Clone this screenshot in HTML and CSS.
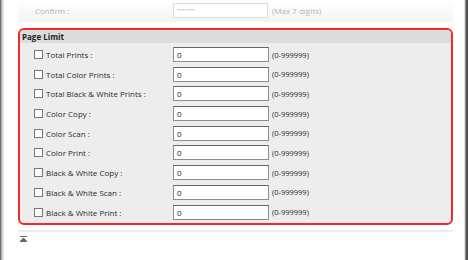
FILE: index.html
```html
<!doctype html>
<html lang="en">

<head>
    <meta charset="utf-8">
    <title>Page Limit</title>
    <link rel="stylesheet" href="styles.css">
</head>

<body>
    <div class="screen">
        <div class="confirm-row">
            <span class="confirm-label">Confirm :</span>
            <span class="confirm-input">&bull;&bull;&bull;&bull;&bull;&bull;&bull;</span>
            <span class="confirm-hint">(Max 7 digits)</span>
        </div>

        <div class="limit-box">
            <div class="limit-head">Page Limit</div>
            <div class="limit-body">
                <div class="limit-row"><span class="check"></span><span class="label">Total Prints :</span><span class="field">0</span><span class="range">(0-999999)</span></div>
                <div class="limit-row"><span class="check"></span><span class="label">Total Color Prints :</span><span class="field">0</span><span class="range">(0-999999)</span></div>
                <div class="limit-row"><span class="check"></span><span class="label">Total Black &amp; White Prints :</span><span class="field">0</span><span class="range">(0-999999)</span></div>
                <div class="limit-row"><span class="check"></span><span class="label">Color Copy :</span><span class="field">0</span><span class="range">(0-999999)</span></div>
                <div class="limit-row"><span class="check"></span><span class="label">Color Scan :</span><span class="field">0</span><span class="range">(0-999999)</span></div>
                <div class="limit-row"><span class="check"></span><span class="label">Color Print :</span><span class="field">0</span><span class="range">(0-999999)</span></div>
                <div class="limit-row"><span class="check"></span><span class="label">Black &amp; White Copy :</span><span class="field">0</span><span class="range">(0-999999)</span></div>
                <div class="limit-row"><span class="check"></span><span class="label">Black &amp; White Scan :</span><span class="field">0</span><span class="range">(0-999999)</span></div>
                <div class="limit-row"><span class="check"></span><span class="label">Black &amp; White Print :</span><span class="field">0</span><span class="range">(0-999999)</span></div>
            </div>
        </div>

        <div class="footer">
            <svg class="to-top" width="7" height="6" viewBox="0 0 7 6">
                <rect x="0" y="0" width="7" height="1" fill="#666" />
                <path d="M3.5 1.5 L7 5 L0 5 Z" fill="#666" />
                <rect x="0" y="5" width="7" height="1" fill="#666" />
            </svg>
        </div>
    </div>
</body>

</html>
```

FILE: styles.css
```css
* {
    box-sizing: border-box;
    margin: 0;
}

html,
body {
    height: 100%;
}

body {
    font-family: "Open Sans", "DejaVu Sans", sans-serif;
    font-size: 8px;
    color: #2a2a2a;
    background: linear-gradient(to right, #4a4a4a 0, #9a9a9a 1px, #e6e6e6 3px, #fff 5px, #fff 464px, #c8c8c8 465px, #555 466px, #4a4a4a 468px);
}

.screen {
    padding-left: 18px;
    width: 453px;
}

.confirm-row {
    display: flex;
    align-items: center;
    height: 22px;
    padding-bottom: 2px;
    background: linear-gradient(to bottom, #fff 0, #f4f4f4 100%);
    color: #b4b4b4;
}

.confirm-label {
    flex-shrink: 0;
    width: 155px;
    padding-left: 17px;
}

.confirm-input {
    flex-shrink: 0;
    width: 95px;
    height: 15px;
    border: 1px solid #ddd;
    background: #fff;
    padding-left: 3px;
    line-height: 13px;
    font-size: 6px;
    letter-spacing: 0.3px;
    color: #aaa;
}

.confirm-hint {
    margin-left: 4px;
}

.limit-box {
    margin-top: 6px;
    border: 2px solid #f42a2a;
    border-radius: 6px;
    background: #ededed;
    overflow: hidden;
}

.limit-head {
    height: 13px;
    line-height: 13px;
    padding-left: 2px;
    background: #dcdcdc;
    font-weight: bold;
    color: #222;
}

.limit-body {
    display: flex;
    flex-direction: column;
    gap: 4.7px;
    padding: 4px 0 3px;
}

.limit-row {
    display: flex;
    align-items: center;
    height: 15px;
}

.check {
    flex-shrink: 0;
    width: 9px;
    height: 9px;
    margin-left: 14px;
    border: 1px solid #777;
    background: #fff;
}

.label {
    flex-shrink: 0;
    width: 130px;
    padding-left: 3px;
}

.field {
    flex-shrink: 0;
    width: 96px;
    height: 15px;
    border: 1px solid #8e8e8e;
    border-top-color: #666;
    background: #fff;
    padding-left: 3px;
    line-height: 13px;
    color: #222;
}

.range {
    margin-left: 3px;
    font-size: 7.5px;
}

.footer {
    margin-top: 5px;
    border-top: 2px solid #eee;
    padding: 4px 0 0 2px;
}

.to-top {
    display: block;
}
```
